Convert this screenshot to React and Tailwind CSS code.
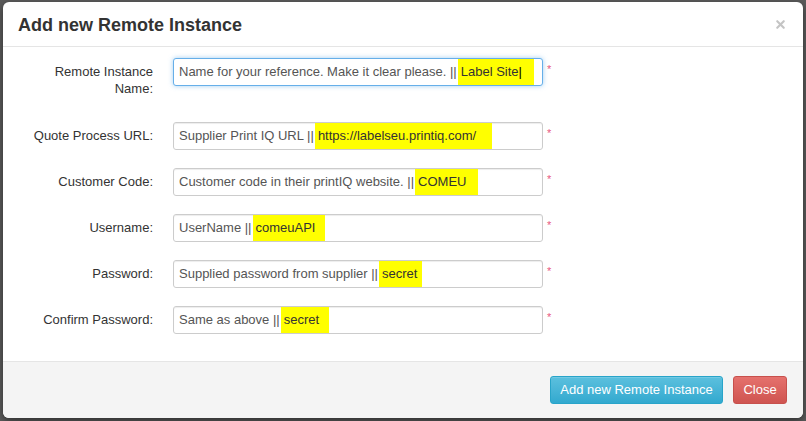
import { X } from "lucide-react";

const rows = [
  {
    label: ["Remote Instance", "Name:"],
    text: "Name for your reference. Make it clear please. ||",
    mark: "Label Site",
    caret: true,
    focus: true,
    extra: "pr-[12px]",
  },
  {
    label: ["Quote Process URL:"],
    text: "Supplier Print IQ URL ||",
    mark: "https://labelseu.printiq.com/",
    extra: "pr-[16px]",
  },
  {
    label: ["Customer Code:"],
    text: "Customer code in their printIQ website. ||",
    mark: "COMEU",
    extra: "pr-[12px]",
  },
  { label: ["Username:"], text: "UserName ||", mark: "comeuAPI", extra: "pr-[10px]" },
  { label: ["Password:"], text: "Supplied password from supplier ||", mark: "secret" },
  { label: ["Confirm Password:"], text: "Same as above ||", mark: "secret", extra: "pr-[10px]" },
];

const Row = ({ row, first }) => (
  <div className={`flex ${first ? "h-[46px]" : "h-[28px]"}`}>
    <div className="w-[150px] pt-[5px] text-right text-[13px] leading-[17px] text-[#333]">
      {row.label.map((l, i) => (
        <div key={i}>{l}</div>
      ))}
    </div>
    <div
      className={`ml-[20px] flex h-[28px] w-[370px] items-center rounded-[3px] border bg-white pl-[5px] text-[13px] text-[#555] ${
        row.focus
          ? "border-[#66afe9] shadow-[0_0_5px_rgba(102,175,233,0.6)]"
          : "border-[#ccc] shadow-[inset_0_1px_1px_rgba(0,0,0,0.075)]"
      }`}
    >
      <span className="whitespace-pre">{row.text}</span>
      <span
        className={`ml-[1px] bg-[#ffff00] py-[3px] pl-[3px] pr-[5px] text-[#333] ${row.extra || ""}`}
      >
        {row.mark}
        {row.caret && <span className="font-light text-black">|</span>}
      </span>
    </div>
    <div className="ml-[4px] pt-[6px] text-[11px] leading-none text-[#e8577f]">*</div>
  </div>
);

export default function App() {
  return (
    <div
      className="h-[421px] w-[806px] overflow-hidden bg-[#5c5c5c] pl-[3px] pt-[2px]"
      style={{ fontFamily: '"Liberation Sans", Arial, sans-serif' }}
    >
      <div className="flex h-[416px] w-[800px] flex-col overflow-hidden rounded-[6px] bg-white shadow-[0_3px_9px_rgba(0,0,0,0.5)]">
        {/* header */}
        <div className="flex h-[45px] items-center justify-between border-b border-[#e5e5e5] pl-[15px] pr-[16px]">
          <h4 className="pt-[2px] text-[18px] font-bold text-[#333]">Add new Remote Instance</h4>
          <X size={13} strokeWidth={4} className="text-[#c4c4c4]" />
        </div>

        {/* body */}
        <div className="flex flex-1 flex-col gap-[18px] pt-[11px]">
          {rows.map((r, i) => (
            <Row key={i} row={r} first={i === 0} />
          ))}
        </div>

        {/* footer */}
        <div className="flex h-[57px] items-center justify-end gap-[10px] border-t border-[#e5e5e5] bg-[#f4f4f4] pr-[16px]">
          <button className="h-[28px] w-[173px] rounded-[3px] border border-[#28a4c9] bg-gradient-to-b from-[#5bc0de] to-[#31a9cf] text-[13px] text-white shadow-[inset_0_1px_0_rgba(255,255,255,0.15)]">
            Add new Remote Instance
          </button>
          <button className="h-[28px] w-[54px] rounded-[3px] border border-[#c7504c] bg-gradient-to-b from-[#e5716d] to-[#cf5450] text-[13px] text-white">
            Close
          </button>
        </div>
      </div>
    </div>
  );
}
